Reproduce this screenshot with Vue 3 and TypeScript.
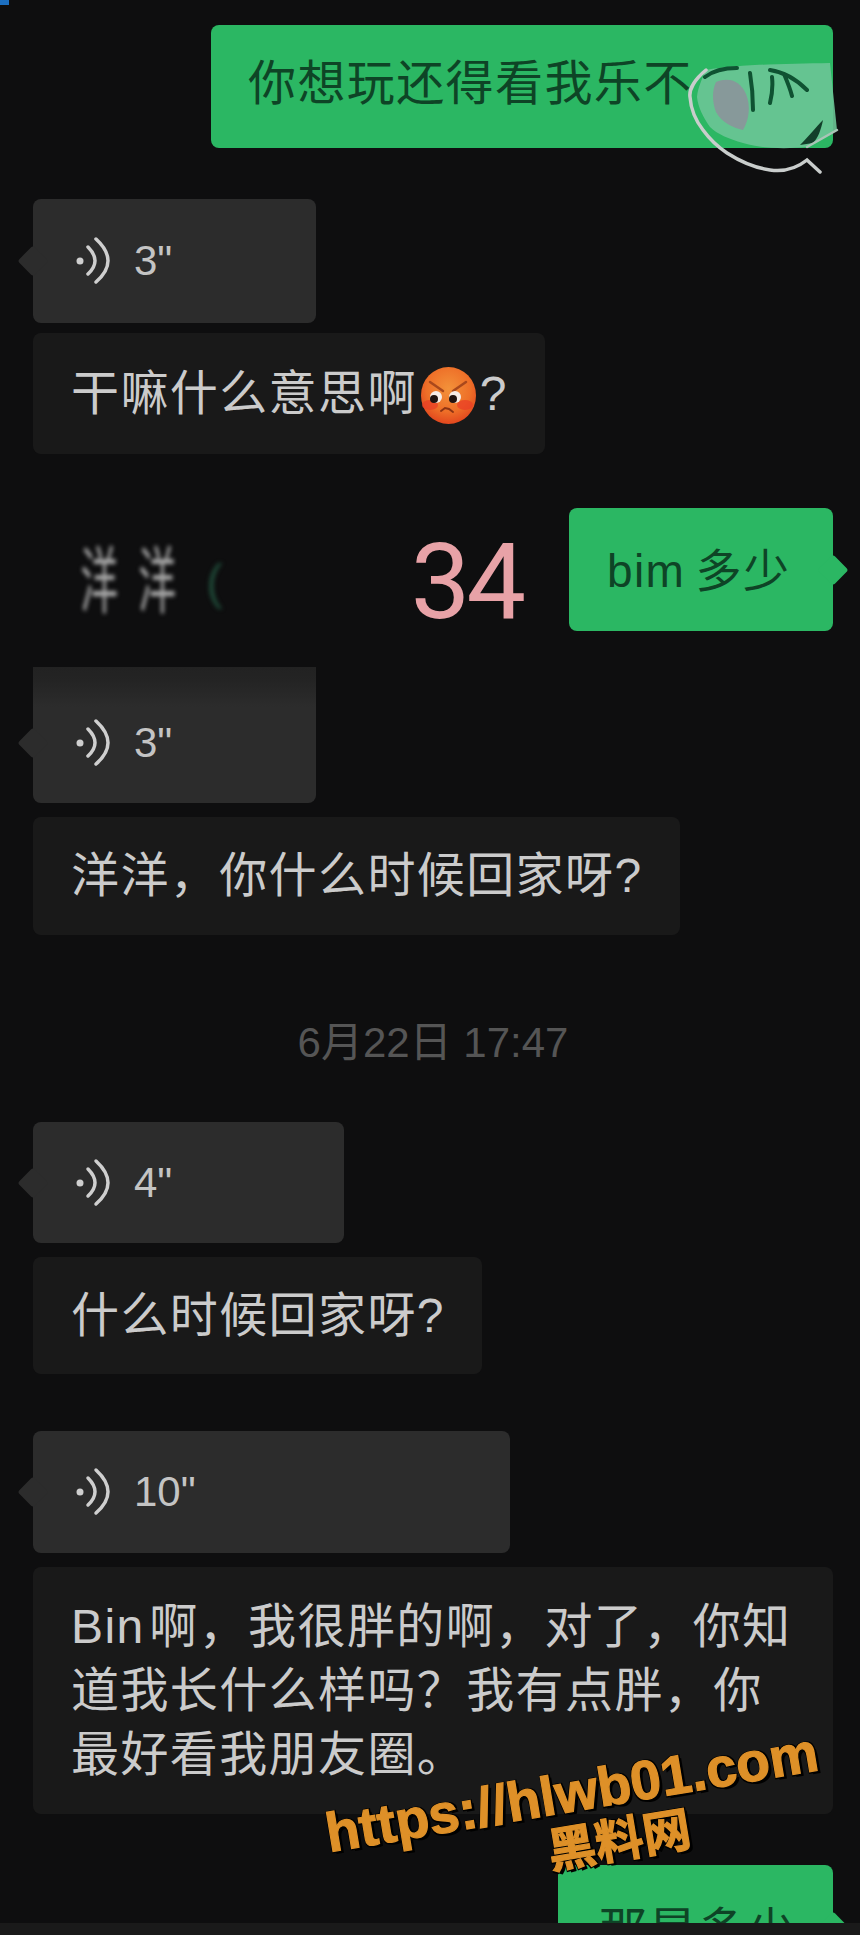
<script setup lang="ts">
interface Msg {
  id: number;
  kind: "voice" | "text" | "stamp";
  cls: string;
  lines: string[];
}

const lower: Msg[] = [
  { id: 1, kind: "voice", cls: "v2", lines: ['3"'] },
  { id: 2, kind: "text", cls: "t2", lines: ["洋洋，你什么时候回家呀?"] },
  { id: 3, kind: "stamp", cls: "stamp", lines: ["6月22日 17:47"] },
  { id: 4, kind: "voice", cls: "v3", lines: ['4"'] },
  { id: 5, kind: "text", cls: "t3", lines: ["什么时候回家呀?"] },
  { id: 6, kind: "voice", cls: "v4", lines: ['10"'] },
  {
    id: 7,
    kind: "text",
    cls: "t4",
    lines: ["Bin 啊，我很胖的啊，对了，你知", "道我长什么样吗？我有点胖，你", "最好看我朋友圈。"],
  },
];
</script>

<template>
  <div class="page">
    <i class="speck" />
    <div class="row right">
      <div class="bubble green wide">
        你想玩还得看我乐不
        <svg class="sticker" viewBox="0 0 170 120" aria-hidden="true">
          <path d="M26 10C60 4 110 4 150 3l7 67-30 17c-20 2-44 2-64-4-14-4-26-9-33-16-7-10-12-20-13-30 1-10 5-18 9-27z" fill="#6cc596" opacity="0.9" />
          <path d="M36 22c12-5 24-2 30 12 5 12 3 26-3 36-10-2-22-8-27-18-4-10-4-22 0-30z" fill="#87999a" />
          <path d="M120 85c8-8 16-18 23-25-2 10-5 18-10 23z" fill="#123f2a" />
          <path d="M25 17C34 10 46 8 57 8M70 13c2 12 3 24 3 37M90 10c14 2 27 10 37 20M92 17c1 9 0 18-2 26M104 14c3 7 6 14 8 22" fill="none" stroke="#0f5232" stroke-width="4" stroke-linecap="round" />
          <path d="M26 10C14 20 9 30 10 37c1 14 6 24 13 33 8 11 15 17 24 23 14 9 28 15 43 17 14 2 27-2 37-10l13 12" fill="none" stroke="#c9cdcc" stroke-width="3.5" stroke-linecap="round" />
          <path d="M127 87l30-17" fill="none" stroke="#a9c4b6" stroke-width="2.5" stroke-linecap="round" />
        </svg>
      </div>
    </div>

    <div class="voice v1">
      <i class="tail" />
      <svg class="wave" viewBox="0 0 36 50" aria-hidden="true">
        <circle cx="6" cy="25" r="3.5" fill="#cfcfcf" />
        <path d="M14 11Q28 25 14 38M22 3Q46 25 22 46" fill="none" stroke="#cfcfcf" stroke-width="3.5" stroke-linecap="round" />
      </svg>
      <span>3"</span>
    </div>
    <div class="bubble dark t1">
      干嘛什么意思啊<svg class="emoji" viewBox="0 0 55 57" aria-hidden="true">
        <defs>
          <radialGradient id="face" cx="50%" cy="38%" r="62%">
            <stop offset="0%" stop-color="#f3923a" />
            <stop offset="65%" stop-color="#ee6f28" />
            <stop offset="100%" stop-color="#e2471e" />
          </radialGradient>
        </defs>
        <ellipse cx="27.5" cy="28.5" rx="27.5" ry="28.5" fill="url(#face)" />
        <ellipse cx="9" cy="38" rx="8" ry="5" fill="#ea3f25" opacity="0.75" />
        <ellipse cx="44" cy="38" rx="8" ry="5" fill="#ea3f25" opacity="0.75" />
        <path d="M9 15l13 9M45 15l-13 9" stroke="#a9481c" stroke-width="2.5" stroke-linecap="round" fill="none" />
        <circle cx="15" cy="30" r="6" fill="#f6ece6" />
        <circle cx="34" cy="30" r="6" fill="#f6ece6" />
        <circle cx="13" cy="32" r="4" fill="#21130f" />
        <circle cx="32" cy="32" r="4" fill="#21130f" />
        <path d="M20 44l4-3 4 1 4 3" stroke="#8e3413" stroke-width="2" fill="none" stroke-linecap="round" />
      </svg>?
    </div>

    <div class="row middle">
      <div class="blurred"><span>洋</span><span>洋</span><em>(</em></div>
      <div class="age">34</div>
      <div class="bubble green bim">bim 多少<i class="tail-r" /></div>
    </div>

    <template v-for="m in lower" :key="m.id">
      <div v-if="m.kind === 'voice'" class="voice" :class="m.cls">
        <i class="tail" />
        <svg class="wave" viewBox="0 0 36 50" aria-hidden="true">
          <circle cx="6" cy="25" r="3.5" fill="#cfcfcf" />
          <path d="M14 11Q28 25 14 38M22 3Q46 25 22 46" fill="none" stroke="#cfcfcf" stroke-width="3.5" stroke-linecap="round" />
        </svg>
        <span>{{ m.lines[0] }}</span>
      </div>
      <div v-else-if="m.kind === 'stamp'" :class="m.cls">{{ m.lines[0] }}</div>
      <div v-else class="bubble dark" :class="m.cls">
        <div v-for="line in m.lines" :key="line" class="line">{{ line }}</div>
      </div>
    </template>

    <div class="row right last">
      <div class="bubble green ask">那是多少<i class="tail-r" /></div>
    </div>

    <div class="strip" />
    <div class="mark">
      <div class="url">https://hlwb01.com</div>
      <div class="name">黑料网</div>
    </div>
  </div>
</template>

<style>
html,
body {
  margin: 0;
  background: #0e0e0f;
}
</style>

<style scoped>
.page {
  position: relative;
  width: 860px;
  height: 1935px;
  overflow: hidden;
  padding: 25px 27px 0 33px;
  box-sizing: border-box;
  background: #0e0e0f;
  font-family: "Liberation Sans", "Noto Sans CJK SC", sans-serif;
}

.speck {
  position: absolute;
  left: 0;
  top: 0;
  width: 9px;
  height: 5px;
  background: #1c6fc0;
}

.row {
  display: flex;
  align-items: center;
}

.right {
  justify-content: flex-end;
}

.bubble {
  position: relative;
  box-sizing: border-box;
  border-radius: 8px;
  font-size: 48px;
  letter-spacing: 1.4px;
  line-height: 64px;
  word-spacing: -10px;
}

.green {
  background: #2bb763;
  color: #0e4426;
}

.dark {
  background: #191919;
  color: #cbcbcb;
  padding: 29px 0 0 38px;
}

.line {
  white-space: nowrap;
}

.wide {
  width: 622px;
  height: 123px;
  padding: 27px 0 0 37px;
  white-space: nowrap;
}

.sticker {
  position: absolute;
  left: 469px;
  top: 35px;
  width: 170px;
  height: 120px;
  filter: blur(0.7px);
}

.voice {
  position: relative;
  display: flex;
  align-items: center;
  gap: 24px;
  box-sizing: border-box;
  padding-left: 41px;
  background: #2c2c2c;
  border-radius: 8px;
  color: #c4c4c4;
  font-size: 42px;
}

.wave {
  width: 36px;
  height: 50px;
}

.tail,
.tail-r {
  position: absolute;
  top: 50%;
  width: 22px;
  height: 22px;
  margin-top: -11px;
  background: #2c2c2c;
  transform: rotate(45deg);
  border-radius: 3px;
}

.tail {
  left: -11px;
}

.tail-r {
  right: -11px;
  background: inherit;
}

.v1 {
  width: 283px;
  height: 124px;
  margin-top: 51px;
}

.t1 {
  margin-top: 10px;
  width: 512px;
  height: 121px;
}

.emoji {
  width: 55px;
  height: 57px;
  margin: 0 4px 0 4px;
  vertical-align: -14px;
}

.middle {
  position: relative;
  justify-content: flex-end;
  margin-top: 54px;
  height: 123px;
}

.blurred {
  position: absolute;
  left: 43px;
  top: 36px;
  display: flex;
  gap: 22px;
  color: #a9a9a9;
  font-size: 50px;
  line-height: 76px;
  filter: blur(2px);
}

.blurred span {
  display: block;
  width: 36px;
  transform: scale(0.75, 1.45);
}

.blurred em {
  margin-left: 14px;
  color: #1f4a38;
  font-style: normal;
}

.age {
  margin: 24px 47px 0 0;
  color: #e8a2a7;
  font-size: 106px;
  font-weight: 400;
  letter-spacing: -4px;
  line-height: 1;
  font-family: Roboto, sans-serif;
}

.bim {
  width: 264px;
  height: 123px;
  padding: 31px 0 0 38px;
  white-space: nowrap;
  font-size: 46px;
  word-spacing: -4px;
}

.v2 {
  width: 283px;
  height: 136px;
  margin-top: 36px;
  padding-top: 16px;
  border-radius: 0 0 8px 8px;
  background: linear-gradient(#222 0, #242424 14px, #2c2c2c 40px);
}

.v2 .tail {
  margin-top: -3px;
}

.t2 {
  margin-top: 14px;
  width: 647px;
  height: 118px;
  padding-top: 27px;
}

.stamp {
  margin-top: 84px;
  text-align: center;
  color: #555;
  font-size: 42px;
  line-height: 48px;
}

.v3 {
  width: 311px;
  height: 121px;
  margin-top: 55px;
}

.t3 {
  margin-top: 14px;
  width: 449px;
  height: 117px;
  padding-top: 27px;
}

.v4 {
  width: 477px;
  height: 122px;
  margin-top: 57px;
}

.t4 {
  margin-top: 14px;
  width: 800px;
  height: 247px;
  padding-top: 28px;
}

.last {
  margin-top: 51px;
}

.ask {
  width: 275px;
  height: 123px;
  padding: 34px 0 0 41px;
  white-space: nowrap;
}

.strip {
  position: absolute;
  left: 0;
  right: 0;
  bottom: 0;
  height: 12px;
  background: #1a1a1a;
}

.mark {
  position: absolute;
  left: 326px;
  top: 1762px;
  width: 500px;
  text-align: center;
  color: #de9028;
  font-weight: 700;
  transform: rotate(-9.5deg);
  -webkit-text-stroke: 1.2px #de9028;
  text-shadow: 3px 3px 0 #000, -1px -1px 0 #000, 2px -1px 0 #000, -1px 2px 0 #000;
}

.url {
  font-size: 55px;
  line-height: 60px;
  white-space: nowrap;
}

.name {
  padding-left: 78px;
  font-size: 48px;
  line-height: 52px;
}
</style>
